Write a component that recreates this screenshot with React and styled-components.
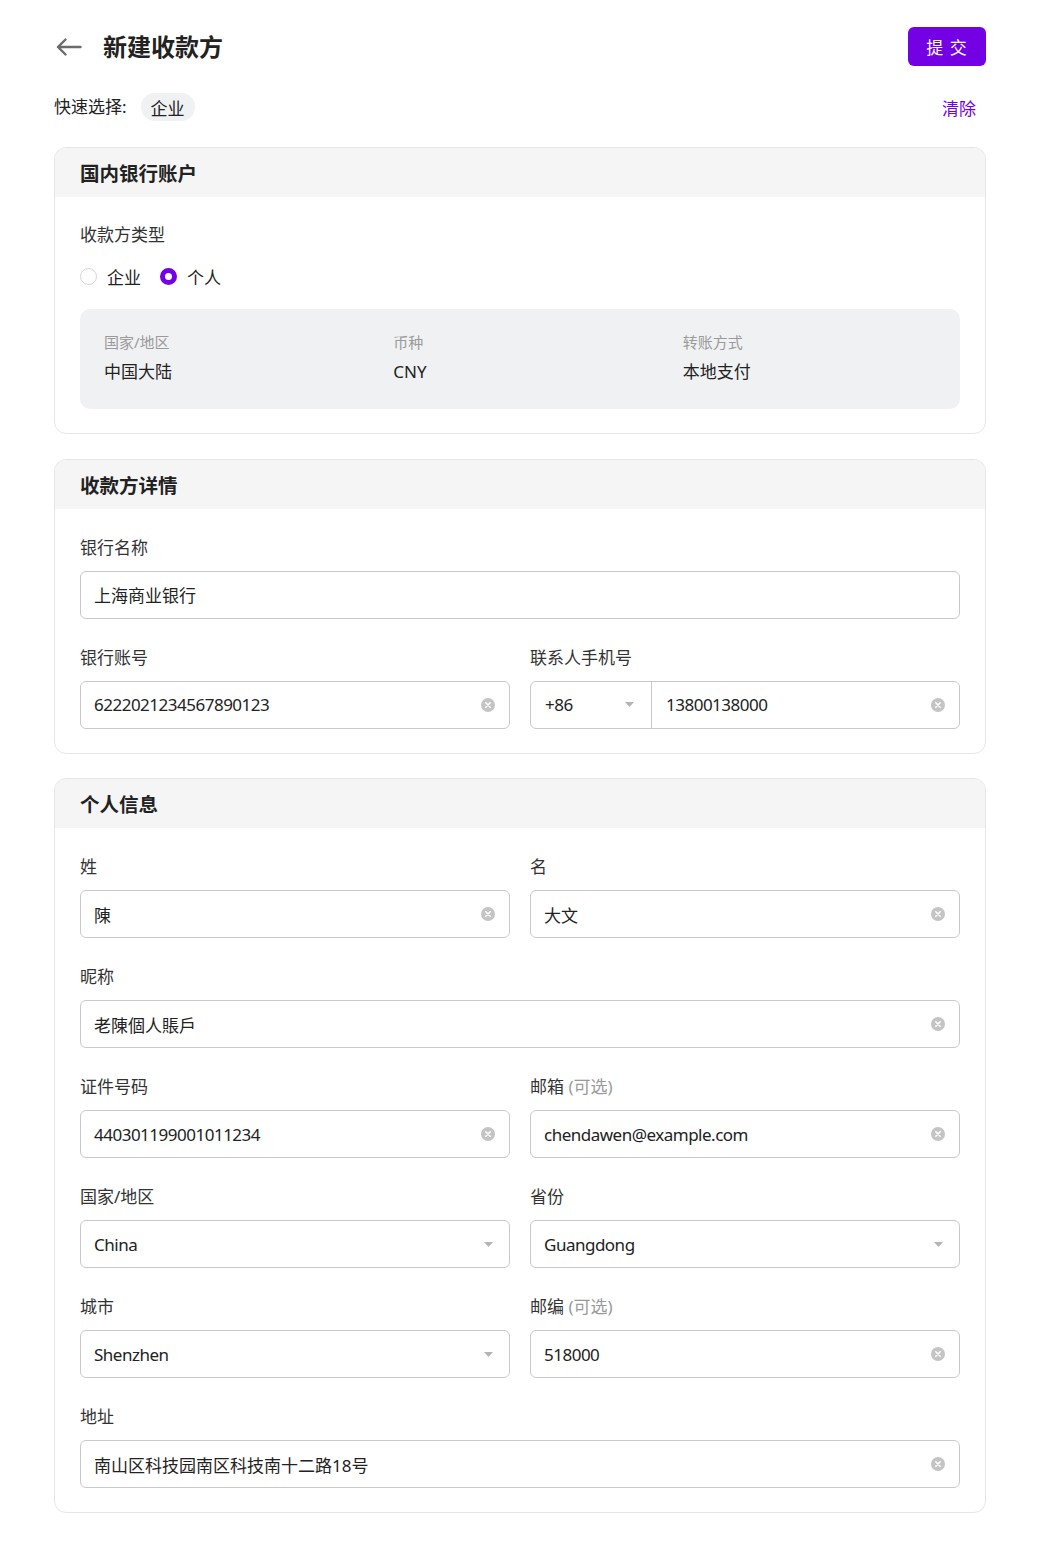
import React from "react";
import styled, { createGlobalStyle } from "styled-components";

const FONT = `"Noto Sans", "Noto Sans CJK SC", sans-serif`;
const PURPLE = "#7400e4";

const Global = createGlobalStyle`
  html, body { margin: 0; padding: 0; background: #fff; }
  body { font-family: ${FONT}; color: #222; }
  * { box-sizing: border-box; }
`;

const Page = styled.div`
  padding: 27px 62px 40px 54px;
  font-family: ${FONT};
`;

const Header = styled.div`
  display: flex;
  align-items: center;
  height: 39px;
`;

const BackButton = styled.button`
  border: 0;
  background: none;
  padding: 0;
  margin: 0 21px 0 2px;
  display: flex;
  align-items: center;
  cursor: pointer;
`;

const Title = styled.h1`
  margin: 0;
  font-size: 24px;
  font-weight: 700;
  color: #222;
  line-height: 32px;
  flex: 1;
`;

const SubmitButton = styled.button`
  width: 78px;
  height: 39px;
  border: 0;
  border-radius: 6px;
  background: ${PURPLE};
  color: #fff;
  font-family: ${FONT};
  font-size: 17px;
  letter-spacing: 1px;
  cursor: pointer;
`;

const QuickRow = styled.div`
  display: flex;
  align-items: center;
  margin-top: 27px;
  height: 28px;
`;

const QuickLabel = styled.span`
  font-size: 17px;
  color: #222;
  margin-right: 14px;
  line-height: 24px;
`;

const Chip = styled.span`
  display: inline-flex;
  align-items: center;
  height: 28px;
  padding: 0 10px;
  border-radius: 14px;
  background: #f0f1f3;
  font-size: 17px;
  color: #222;
`;

const ClearLink = styled.button`
  margin-left: auto;
  margin-right: 10px;
  border: 0;
  background: none;
  padding: 0;
  font-family: ${FONT};
  font-size: 17px;
  color: ${PURPLE};
  cursor: pointer;
`;

const Cards = styled.div`
  display: flex;
  flex-direction: column;
  gap: 24.5px;
  margin-top: 26px;
`;

const Card = styled.section`
  border: 1px solid #e6e6e6;
  border-radius: 12px;
  overflow: hidden;
`;

const CardHeader = styled.div`
  height: 49px;
  background: #f5f5f5;
  padding: 0 25px;
  display: flex;
  align-items: center;
  font-size: 19.5px;
  font-weight: 700;
  color: #222;
`;

const CardBody = styled.div`
  padding: ${(p) => p.$top || 27}px 25px 24px 25px;
`;

const Label = styled.div`
  font-size: 17px;
  line-height: 24px;
  color: #333;
  margin-bottom: ${(p) => p.$mb || 11}px;
`;

const Optional = styled.span`
  color: #9a9a9a;
`;

const RadioGroup = styled.div`
  display: flex;
  align-items: center;
  gap: 19px;
  height: 24px;
  margin-bottom: 21px;
`;

const RadioOption = styled.label`
  display: flex;
  align-items: center;
  gap: 10px;
  font-size: 17px;
  color: #222;
  cursor: pointer;
`;

const RadioDot = styled.span`
  width: 17px;
  height: 17px;
  border-radius: 50%;
  border: ${(p) => (p.$checked ? `5.5px solid ${PURPLE}` : "1px solid #d4d4d4")};
  background: #fff;
`;

const InfoBox = styled.div`
  background: #f0f1f3;
  border-radius: 10px;
  padding: 22px 24px 25px 24px;
  display: grid;
  grid-template-columns: repeat(3, 1fr);
  column-gap: 36px;
`;

const InfoLabel = styled.div`
  font-size: 15px;
  line-height: 22px;
  color: #9a9a9a;
  margin-bottom: 7px;
`;

const InfoValue = styled.div`
  font-size: 17px;
  line-height: 24px;
  color: #222;
`;

const FieldGrid = styled.div`
  display: grid;
  grid-template-columns: 1fr 1fr;
  column-gap: 20px;
  row-gap: 27px;
`;

const Field = styled.div`
  grid-column: ${(p) => (p.$full ? "1 / -1" : "auto")};
  min-width: 0;
`;

const InputBox = styled.div`
  height: 48px;
  border: 1px solid #c9c9cd;
  border-radius: 6px;
  display: flex;
  align-items: center;
  background: #fff;
`;

const TextInput = styled.input`
  flex: 1;
  min-width: 0;
  height: 100%;
  border: 0;
  outline: none;
  background: transparent;
  padding: 0 0 0 ${(p) => p.$pad || 13}px;
  font-family: ${FONT};
  font-size: 17px;
  letter-spacing: ${(p) => (p.$latin ? "-0.5px" : "0")};
  color: #222;
`;

const Adornment = styled.span`
  display: flex;
  align-items: center;
  justify-content: center;
  width: 18px;
  margin-right: 12px;
  flex-shrink: 0;
`;

const PhonePrefix = styled.div`
  width: 121px;
  height: 100%;
  display: flex;
  align-items: center;
  padding: 0 17px 0 14px;
  border-right: 1px solid #c9c9cd;
  font-size: 17px;
  color: #222;
  letter-spacing: -0.5px;
  justify-content: space-between;
`;

const isLatin = (v) => /^[\x00-\x7f]+$/.test(v);

const ClearIcon = () => (
  <svg width="14" height="14" viewBox="0 0 14 14">
    <circle cx="7" cy="7" r="7" fill="#c4c4c4" />
    <path d="M4.8 4.8 L9.2 9.2 M9.2 4.8 L4.8 9.2" stroke="#fff" strokeWidth="1.6" strokeLinecap="round" />
  </svg>
);

const Caret = () => (
  <svg width="9" height="5" viewBox="0 0 9 5">
    <path d="M0 0 H9 L4.5 5 Z" fill="#b5b5b5" />
  </svg>
);

const BackArrow = () => (
  <svg width="26" height="18" viewBox="0 0 26 18" fill="none">
    <path d="M24.5 9 H2 M9.5 1.5 L2 9 L9.5 16.5" stroke="#6b6b6b" strokeWidth="2.4" strokeLinecap="round" strokeLinejoin="round" />
  </svg>
);

const TextField = ({ label, optional, value, full, clear = true, select }) => (
  <Field $full={full}>
    <Label>
      {label}
      {optional && <Optional> (可选)</Optional>}
    </Label>
    <InputBox>
      <TextInput defaultValue={value} readOnly={select} $latin={isLatin(value)} />
      {select ? (
        <Adornment>
          <Caret />
        </Adornment>
      ) : clear ? (
        <Adornment>
          <ClearIcon />
        </Adornment>
      ) : null}
    </InputBox>
  </Field>
);

export default function App() {
  return (
    <>
      <Global />
      <Page>
        <Header>
          <BackButton aria-label="返回">
            <BackArrow />
          </BackButton>
          <Title>新建收款方</Title>
          <SubmitButton>提 交</SubmitButton>
        </Header>

        <QuickRow>
          <QuickLabel>快速选择:</QuickLabel>
          <Chip>企业</Chip>
          <ClearLink>清除</ClearLink>
        </QuickRow>

        <Cards>
          <Card>
            <CardHeader>国内银行账户</CardHeader>
            <CardBody $top={26}>
              <Label $mb={17}>收款方类型</Label>
              <RadioGroup>
                <RadioOption>
                  <RadioDot />
                  企业
                </RadioOption>
                <RadioOption>
                  <RadioDot $checked />
                  个人
                </RadioOption>
              </RadioGroup>
              <InfoBox>
                <div>
                  <InfoLabel>国家/地区</InfoLabel>
                  <InfoValue>中国大陆</InfoValue>
                </div>
                <div>
                  <InfoLabel>币种</InfoLabel>
                  <InfoValue>CNY</InfoValue>
                </div>
                <div>
                  <InfoLabel>转账方式</InfoLabel>
                  <InfoValue>本地支付</InfoValue>
                </div>
              </InfoBox>
            </CardBody>
          </Card>

          <Card>
            <CardHeader>收款方详情</CardHeader>
            <CardBody>
              <FieldGrid>
                <TextField full label="银行名称" value="上海商业银行" clear={false} />
                <TextField label="银行账号" value="6222021234567890123" />
                <Field>
                  <Label>联系人手机号</Label>
                  <InputBox>
                    <PhonePrefix>
                      <span>+86</span>
                      <Caret />
                    </PhonePrefix>
                    <TextInput defaultValue="13800138000" $pad={14} $latin />
                    <Adornment>
                      <ClearIcon />
                    </Adornment>
                  </InputBox>
                </Field>
              </FieldGrid>
            </CardBody>
          </Card>

          <Card>
            <CardHeader>个人信息</CardHeader>
            <CardBody>
              <FieldGrid>
                <TextField label="姓" value="陳" />
                <TextField label="名" value="大文" />
                <TextField full label="昵称" value="老陳個人賬戶" />
                <TextField label="证件号码" value="440301199001011234" />
                <TextField label="邮箱" optional value="chendawen@example.com" />
                <TextField label="国家/地区" value="China" select />
                <TextField label="省份" value="Guangdong" select />
                <TextField label="城市" value="Shenzhen" select />
                <TextField label="邮编" optional value="518000" />
                <TextField full label="地址" value="南山区科技园南区科技南十二路18号" />
              </FieldGrid>
            </CardBody>
          </Card>
        </Cards>
      </Page>
    </>
  );
}
